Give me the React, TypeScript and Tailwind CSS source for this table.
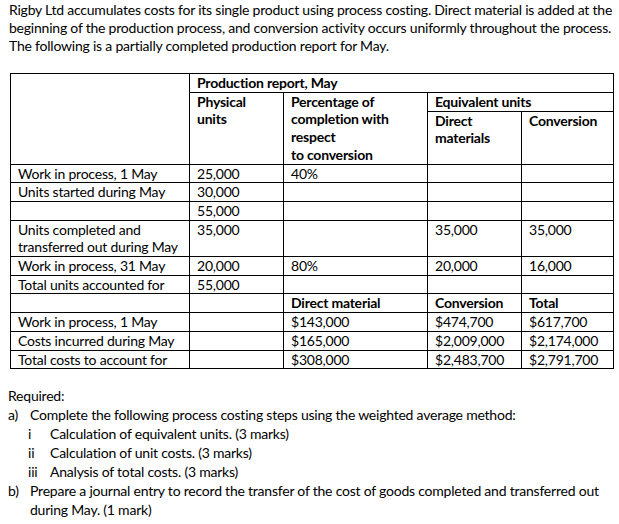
import React from "react"

const cell = "border border-black align-top px-[7px] py-0 text-left"

type Row = {
  label: string[]
  physical?: string
  pct?: string
  dm?: string
  conv?: string
  bold?: boolean
}

const unitRows: Row[] = [
  { label: ["Work in process, 1 May"], physical: "25,000", pct: "40%" },
  { label: ["Units started during May"], physical: "30,000" },
  { label: [""], physical: "55,000" },
  { label: ["Units completed and", "transferred out during May"], physical: "35,000", dm: "35,000", conv: "35,000" },
  { label: ["Work in process, 31 May"], physical: "20,000", pct: "80%", dm: "20,000", conv: "16,000" },
  { label: ["Total units accounted for"], physical: "55,000" },
  { label: [""], pct: "Direct material", dm: "Conversion", conv: "Total", bold: true },
  { label: ["Work in process, 1 May"], pct: "$143,000", dm: "$474,700", conv: "$617,700" },
  { label: ["Costs incurred during May"], pct: "$165,000", dm: "$2,009,000", conv: "$2,174,000" },
  { label: ["Total costs to account for"], pct: "$308,000", dm: "$2,483,700", conv: "$2,791,700" },
]

function ReportTable() {
  return (
    <table className="table-fixed border-collapse w-[603px] ml-[10px] mt-[18px] leading-[17.7px]">
      <colgroup>
        <col className="w-[179px]" />
        <col className="w-[94px]" />
        <col className="w-[144px]" />
        <col className="w-[94px]" />
        <col className="w-[92px]" />
      </colgroup>
      <thead>
        <tr className="h-[18.5px]">
          <th rowSpan={3} className={cell}></th>
          <th colSpan={4} className={`${cell} font-bold`}>Production report, May</th>
        </tr>
        <tr className="h-[19px]">
          <th rowSpan={2} className={`${cell} font-bold`}>
            Physical
            <br />
            units
          </th>
          <th rowSpan={2} className={`${cell} font-bold`}>
            Percentage of
            <br />
            completion with
            <br />
            respect
            <br />
            to conversion
          </th>
          <th colSpan={2} className={`${cell} font-bold`}>Equivalent units</th>
        </tr>
        <tr>
          <th className={`${cell} font-bold`}>
            Direct
            <br />
            materials
          </th>
          <th className={`${cell} font-bold`}>Conversion</th>
        </tr>
      </thead>
      <tbody>
        {unitRows.map((r, i) => (
          <tr key={i}>
            <td className={cell}>
              {r.label.map((l, j) => (
                <div key={j} className="h-[17.7px] whitespace-nowrap">{l}</div>
              ))}
            </td>
            <td className={cell}>{r.physical}</td>
            <td className={`${cell} ${r.bold ? "font-bold" : ""}`}>{r.pct}</td>
            <td className={`${cell} ${r.bold ? "font-bold" : ""}`}>{r.dm}</td>
            <td className={`${cell} ${r.bold ? "font-bold" : ""}`}>{r.conv}</td>
          </tr>
        ))}
      </tbody>
    </table>
  )
}

export default function App() {
  return (
    <div className="w-[619px] h-[524px] bg-white text-black font-['Lato',sans-serif] text-[14px] tracking-[-0.22px] overflow-hidden">
      <div className="pl-[9px] pt-[1px] leading-[18px] whitespace-nowrap">
        <div>Rigby Ltd accumulates costs for its single product using process costing. Direct material is added at the</div>
        <div>beginning of the production process, and conversion activity occurs uniformly throughout the process.</div>
        <div>The following is a partially completed production report for May.</div>
      </div>

      <ReportTable />

      <div className="pl-[8px] mt-[17px] leading-[19px] whitespace-nowrap">
        <div>Required:</div>
        <div className="flex">
          <span className="w-[22px]">a)</span>
          <span>Complete the following process costing steps using the weighted average method:</span>
        </div>
        <div className="flex pl-[20px]">
          <span className="w-[22px]">i</span>
          <span>Calculation of equivalent units. (3 marks)</span>
        </div>
        <div className="flex pl-[20px]">
          <span className="w-[22px]">ii</span>
          <span>Calculation of unit costs. (3 marks)</span>
        </div>
        <div className="flex pl-[20px]">
          <span className="w-[22px]">iii</span>
          <span>Analysis of total costs. (3 marks)</span>
        </div>
        <div className="flex">
          <span className="w-[22px] shrink-0">b)</span>
          <span>
            Prepare a journal entry to record the transfer of the cost of goods completed and transferred out
            <br />
            during May. (1 mark)
          </span>
        </div>
      </div>
    </div>
  )
}
